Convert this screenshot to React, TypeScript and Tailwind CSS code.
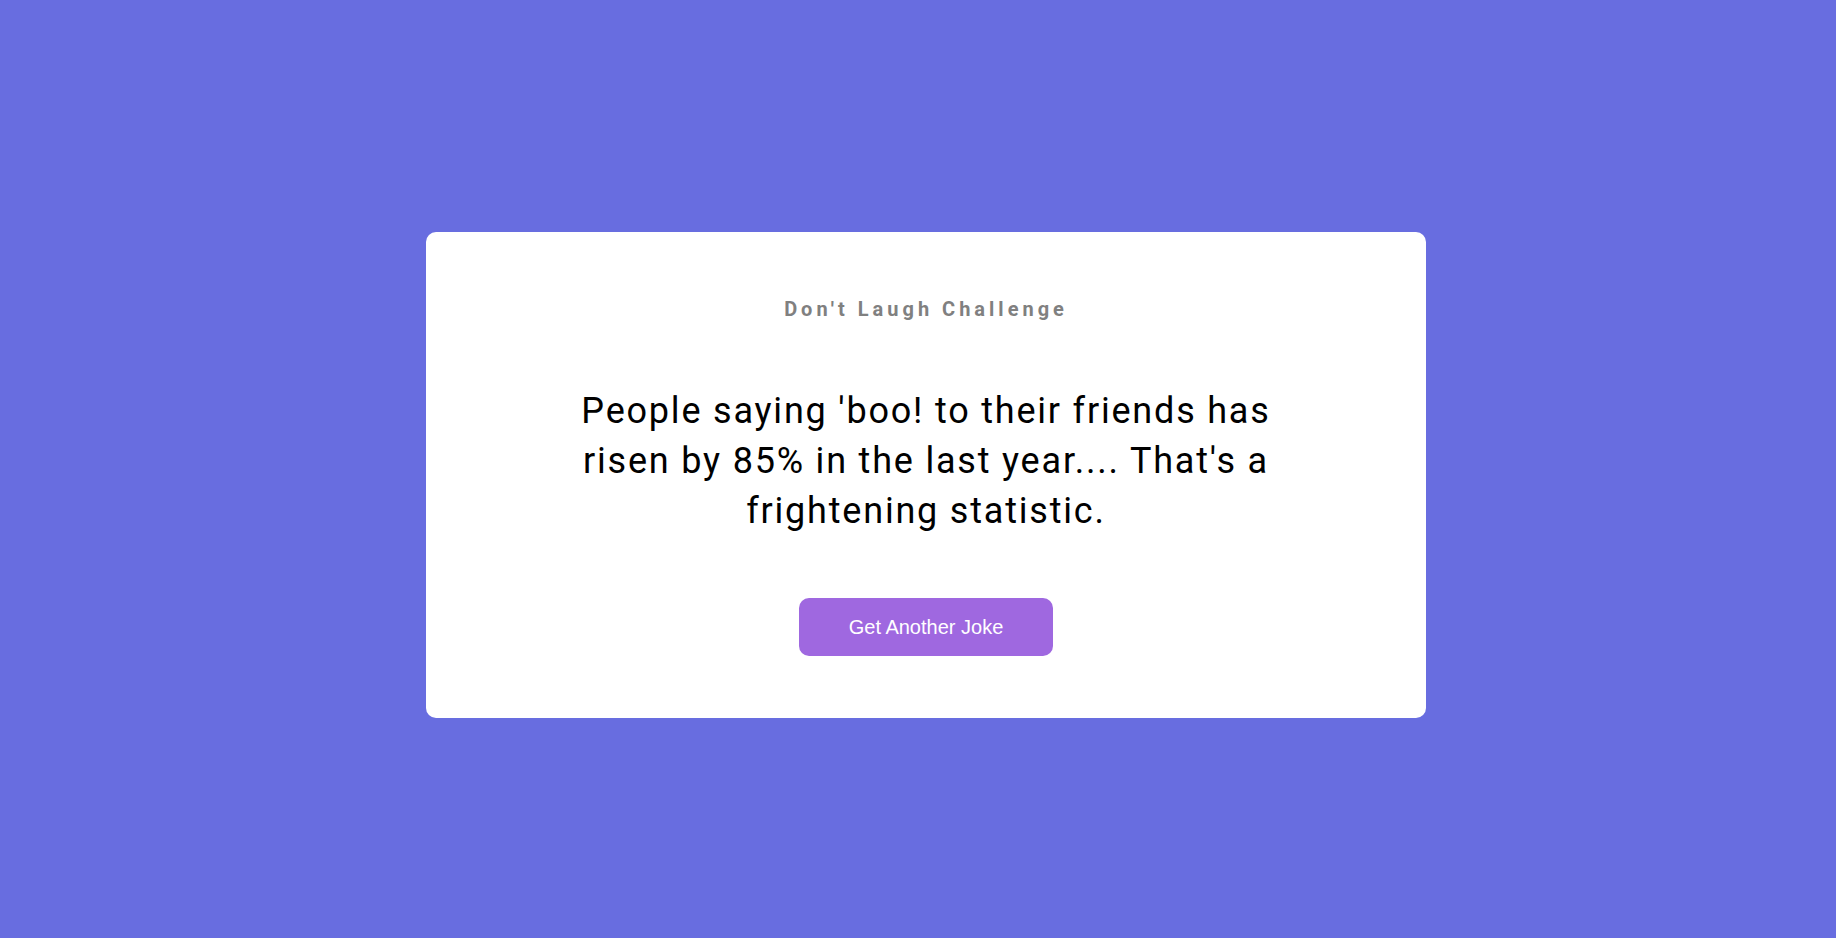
import React from "react";

const App = () => {
  return (
    <div className="min-h-screen w-full bg-[#686de0] flex items-center justify-center pl-4 pt-3 font-['Roboto',sans-serif]">
      <div className="w-[1000px] h-[486px] bg-white rounded-[10px] flex flex-col items-center pt-[62px]">
        <h3 className="text-[20px] font-bold tracking-[4px] text-[#808080]">
          Don't Laugh Challenge
        </h3>
        <p className="mt-[62px] w-[720px] text-center text-[36px] leading-[50px] tracking-[1.8px] text-black">
          People saying 'boo! to their friends has risen by 85% in the last
          year.... That's a frightening statistic.
        </p>
        <button className="mt-[62px] w-[254px] h-[58px] rounded-[10px] bg-[#9f68e0] text-white text-[20px] font-['Liberation_Sans',Arial,sans-serif]">
          Get Another Joke
        </button>
      </div>
    </div>
  );
};

export default App;
